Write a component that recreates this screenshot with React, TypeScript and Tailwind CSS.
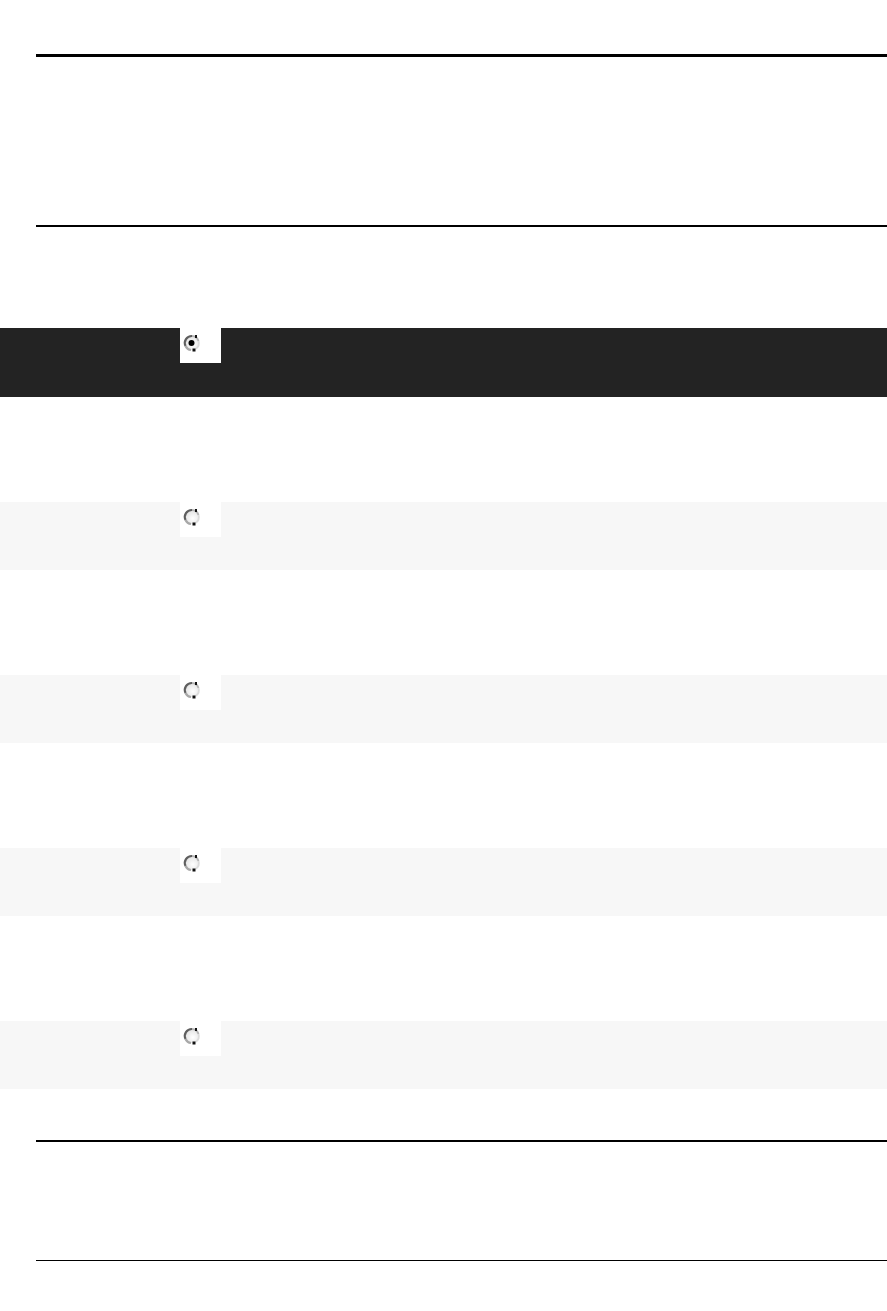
import React from 'react';

interface RowProps {
  selected?: boolean;
}

// Old-style bitmap radio, drawn small and slightly rough
function RadioGlyph({ selected }: { selected?: boolean }) {
  const id = selected ? 'rg-on' : 'rg-off';
  return (
    <svg width="41" height="35" viewBox="0 0 41 35" className="block">
      <defs>
        <radialGradient id={id} cx="0.6" cy="0.6" r="0.7">
          <stop offset="0" stopColor="#ffffff" />
          <stop offset="1" stopColor="#dedede" />
        </radialGradient>
      </defs>
      <circle cx="11.5" cy="15" r="7" fill={`url(#${id})`} />
      <path d="M12 8 A7 7 0 0 0 5.5 18" fill="none" stroke="#5f5f5f" strokeWidth="2.2" />
      <path d="M5.5 18 A7 7 0 0 0 11 22" fill="none" stroke="#a8a8a8" strokeWidth="2.2" />
      <path d="M12 8 A7 7 0 0 1 18.5 13" fill="none" stroke="#b4b4b4" strokeWidth="1.8" />
      <path d="M18.5 13 A7 7 0 0 1 15.5 21" fill="none" stroke="#dcdcdc" strokeWidth="1.8" />
      <rect x="15" y="7" width="2" height="3" fill="#111" />
      <rect x="12.5" y="20.5" width="3" height="3" fill="#111" />
      {selected && <circle cx="11.5" cy="15" r="3" fill="#000" />}
    </svg>
  );
}

function ChoiceRow({ selected }: RowProps) {
  return (
    <div className={`w-full ${selected ? 'h-[69px] bg-[#232323]' : 'h-[68px] bg-[#f7f7f7]'}`}>
      <div className="ml-[180px] h-[35px] w-[41px] bg-white">
        <RadioGlyph selected={selected} />
      </div>
    </div>
  );
}

export default function App() {
  return (
    <div className="w-[887px] h-[1311px] bg-white overflow-hidden" style={{ fontFamily: '"Liberation Sans", Arial, sans-serif' }}>
      {/* Header rules */}
      <div className="pt-[54px] pl-[36px]">
        <div className="h-[3px] bg-black" />
        <div className="h-[168px]" />
        <div className="h-[2px] bg-black" />
      </div>

      {/* Choices */}
      <div className="mt-[101px] flex flex-col gap-[105px]">
        <ChoiceRow selected />
        <ChoiceRow />
        <ChoiceRow />
        <ChoiceRow />
        <ChoiceRow />
      </div>

      {/* Footer rules */}
      <div className="mt-[51px] pl-[36px]">
        <div className="h-[2px] bg-black" />
        <div className="h-[118px]" />
        <div className="h-px bg-black" />
      </div>
    </div>
  );
}
